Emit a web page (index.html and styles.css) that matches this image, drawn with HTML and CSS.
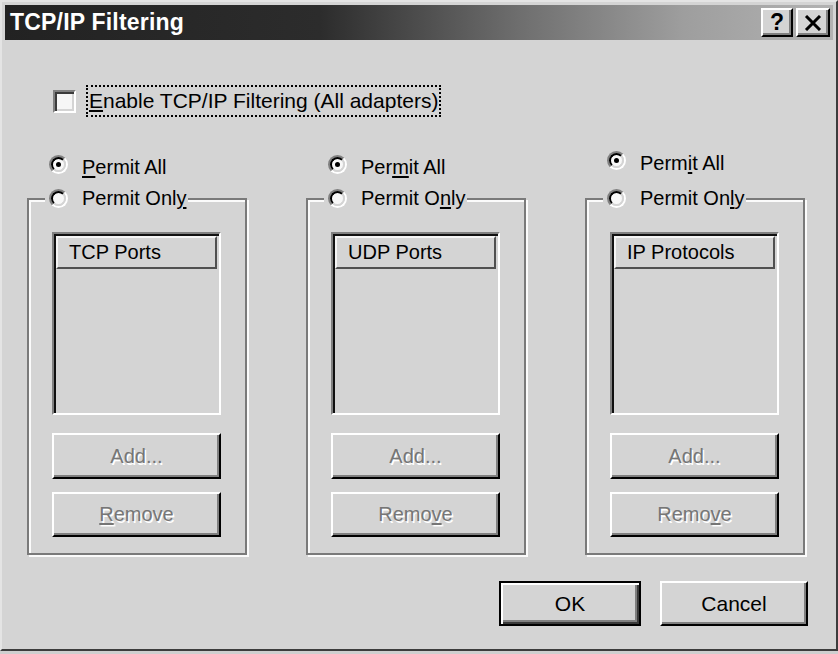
FILE: index.html
```html
<!DOCTYPE html>
<html>
<head>
<meta charset="utf-8">
<link rel="stylesheet" href="styles.css">
</head>
<body>
<div class="window">
  <div class="titlebar">
    <span class="title">TCP/IP Filtering</span>
    <div class="tb-buttons">
      <span class="tb-btn help">?</span>
      <span class="tb-btn close"><svg width="18" height="16" viewBox="0 0 18 16"><path d="M2 1 L16 15 M16 1 L2 15" stroke="#000" stroke-width="3"/></svg></span>
    </div>
  </div>
  <div class="content">
    <div class="check-row">
      <span class="checkbox"></span>
      <span class="focus-label"><u>E</u>nable TCP/IP Filtering (All adapters)</span>
    </div>
    <div class="columns">
      <div class="col">
        <div class="radio-row"><span class="radio"><span class="radio-in checked"></span></span><span class="rlabel"><u>P</u>ermit All</span></div>
        <div class="group">
          <div class="legend"><span class="radio"><span class="radio-in"></span></span><span class="rlabel">Permit Onl<u>y</u></span></div>
          <div class="listbox"><div class="lb-header">TCP Ports</div></div>
          <div class="btn disabled add">Add...</div>
          <div class="btn disabled remove"><u>R</u>emove</div>
        </div>
      </div>
      <div class="col">
        <div class="radio-row"><span class="radio"><span class="radio-in checked"></span></span><span class="rlabel">Per<u>m</u>it All</span></div>
        <div class="group">
          <div class="legend"><span class="radio"><span class="radio-in"></span></span><span class="rlabel">Permit O<u>n</u>ly</span></div>
          <div class="listbox"><div class="lb-header">UDP Ports</div></div>
          <div class="btn disabled add">Add...</div>
          <div class="btn disabled remove">Remo<u>v</u>e</div>
        </div>
      </div>
      <div class="col">
        <div class="radio-row up"><span class="radio"><span class="radio-in checked"></span></span><span class="rlabel">Perm<u>i</u>t All</span></div>
        <div class="group">
          <div class="legend"><span class="radio"><span class="radio-in"></span></span><span class="rlabel">Permit On<u>l</u>y</span></div>
          <div class="listbox"><div class="lb-header">IP Protocols</div></div>
          <div class="btn disabled add">Add...</div>
          <div class="btn disabled remove">Remo<u>v</u>e</div>
        </div>
      </div>
    </div>
    <div class="footer">
      <div class="btn default">OK</div>
      <div class="btn cancel">Cancel</div>
    </div>
  </div>
</div>
</body>
</html>
```
FILE: styles.css
```css
html, body {
  margin: 0;
  padding: 0;
  background: #cfcfcf;
}
body {
  font-family: "Liberation Sans", Arial, sans-serif;
  font-size: 20px;
  color: #000;
}
.window {
  width: 838px;
  height: 651px;
  box-sizing: border-box;
  background: #d4d4d4;
  border: 2px solid;
  border-color: #e4e4e4 #3c3c3c #3c3c3c #e4e4e4;
  padding: 3px;
}
.titlebar {
  height: 35px;
  display: flex;
  align-items: center;
  justify-content: space-between;
  background: linear-gradient(to right, #222 0%, #2c2c2c 38%, #6e6e6e 62%, #9e9e9e 82%, #b2b2b2 100%);
  padding: 0 3px 0 5px;
}
.title {
  color: #fff;
  font-weight: bold;
  font-size: 23px;
  letter-spacing: 0.2px;
}
.tb-buttons {
  display: flex;
  gap: 3px;
}
.tb-btn {
  box-sizing: border-box;
  height: 29px;
  width: 32px;
  background: #d4d4d4;
  border: 2px solid;
  border-color: #fff #000 #000 #fff;
  box-shadow: inset -2px -2px 0 #808080;
  display: flex;
  align-items: center;
  justify-content: center;
}
.tb-btn.help {
  font-weight: bold;
  font-size: 23px;
  line-height: 1;
}
.tb-btn.close {
  width: 34px;
}
.content {
  display: flex;
  flex-direction: column;
}
.check-row {
  margin-top: 45px;
  height: 32px;
  display: flex;
  align-items: center;
  padding-left: 48px;
}
.checkbox {
  width: 23px;
  height: 23px;
  box-sizing: border-box;
  background: #f6f6f6;
  border: 2px solid;
  border-color: #808080 #fff #fff #808080;
  box-shadow: inset 2px 2px 0 #3a3a3a, inset -2px -2px 0 #d4d4d4;
}
.focus-label {
  margin-left: 10px;
  font-size: 21px;
  height: 32px;
  line-height: 28px;
  box-sizing: border-box;
  padding: 0 1px 0 1px;
  border: 2px dotted #000;
}
.focus-label u, .rlabel u, .btn u {
  text-decoration-thickness: 2px;
  text-underline-offset: 2px;
}
.columns {
  margin-top: 38px;
  padding-left: 22px;
  display: grid;
  grid-template-columns: 220px 220px 220px;
  column-gap: 59px;
}
.col {
  display: flex;
  flex-direction: column;
}
.radio-row {
  height: 24px;
  display: flex;
  align-items: center;
  padding-left: 22px;
}
.radio-row.up {
  position: relative;
  top: -4px;
}
.radio {
  width: 19px;
  height: 19px;
  box-sizing: border-box;
  border-radius: 50%;
  border: 2px solid;
  border-color: #808080 #fff #fff #808080;
  flex: none;
  position: relative;
  top: -3px;
}
.radio-in {
  display: flex;
  align-items: center;
  justify-content: center;
  width: 15px;
  height: 15px;
  box-sizing: border-box;
  border-radius: 50%;
  border: 2px solid;
  border-color: #000 #d4d4d4 #d4d4d4 #000;
  background: #f8f8f8;
}
.radio-in.checked::after {
  content: "";
  width: 5px;
  height: 5px;
  border-radius: 50%;
  background: #000;
}
.rlabel {
  margin-left: 14px;
  line-height: 24px;
}
.group {
  margin-top: 19px;
  height: 357px;
  box-sizing: border-box;
  position: relative;
  border: 2px solid #7a7a7a;
  box-shadow: inset 2px 2px 0 #fbfbfb, 2px 2px 0 #fbfbfb;
  display: flex;
  flex-direction: column;
  padding: 32px 24px 0 23px;
}
.legend {
  position: absolute;
  top: -14px;
  left: 16px;
  height: 24px;
  display: flex;
  align-items: center;
  padding: 0 2px 0 4px;
  background: #d4d4d4;
}
.legend .radio {
  top: 0;
}
.listbox {
  height: 183px;
  box-sizing: border-box;
  border: 2px solid;
  border-color: #808080 #fff #fff #808080;
  box-shadow: inset 2px 2px 0 #101010, inset -2px -2px 0 #d4d4d4;
  padding: 2px 2px 0 2px;
}
.lb-header {
  height: 33px;
  box-sizing: border-box;
  border: 2px solid;
  border-color: #f4f4f4 #505050 #505050 #f4f4f4;
  padding-left: 11px;
  line-height: 29px;
}
.btn {
  box-sizing: border-box;
  background: #d4d4d4;
  border: 2px solid;
  border-color: #fff #000 #000 #fff;
  box-shadow: inset -2px -2px 0 #808080;
  display: flex;
  align-items: center;
  justify-content: center;
}
.btn.add {
  margin-top: 18px;
  height: 46px;
}
.btn.remove {
  margin-top: 13px;
  height: 45px;
}
.btn.disabled {
  color: #767676;
  text-shadow: 1.5px 1.5px 0 #fff;
}
.footer {
  margin-top: 26px;
  display: flex;
  justify-content: flex-end;
  gap: 19px;
  padding-right: 25px;
}
.footer .btn {
  height: 45px;
  font-size: 21px;
}
.btn.default {
  width: 142px;
  border: 2px solid #000;
  box-shadow: inset 2px 2px 0 #fff, inset -2px -2px 0 #3a3a3a, inset -4px -4px 0 #808080;
}
.btn.cancel {
  width: 148px;
}
```
